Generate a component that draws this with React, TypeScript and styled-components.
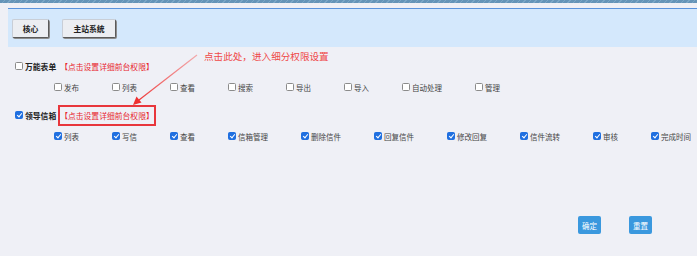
import React from "react";
import styled, { createGlobalStyle } from "styled-components";

interface Perm {
  label: string;
  checked: boolean;
}

interface Group {
  title: string;
  checked: boolean;
  highlighted: boolean;
  items: Perm[];
}

const groups: Group[] = [
  {
    title: "万能表单",
    checked: false,
    highlighted: false,
    items: ["发布", "列表", "查看", "搜索", "导出", "导入", "自动处理", "管理"].map((label) => ({
      label,
      checked: false,
    })),
  },
  {
    title: "领导信箱",
    checked: true,
    highlighted: true,
    items: ["列表", "写信", "查看", "信箱管理", "删除信件", "回复信件", "修改回复", "信件流转", "审核", "完成时间"].map(
      (label) => ({ label, checked: true })
    ),
  },
];

const GlobalStyle = createGlobalStyle`
  html, body {
    margin: 0;
    padding: 0;
    background: #eff0f6;
    overflow: hidden;
  }
  body {
    font-family: "Noto Sans CJK SC", "Noto Sans", sans-serif;
    color: #333;
  }
`;

const Page = styled.div`
  position: relative;
  width: 697px;
  height: 256px;
`;

const TopStripe = styled.div`
  height: 3px;
  background: repeating-linear-gradient(135deg, #6594b8 0 3px, #7ba6c6 3px 4px);
`;

const Toolbar = styled.div`
  display: flex;
  align-items: center;
  gap: 13px;
  height: 38px;
  margin: 5px 0 0 8px;
  padding: 0 0 0 4px;
  border-top: 1px solid #5b93dc;
  background: #d4e8fc;
`;

const TabButton = styled.button<{ width: number }>`
  width: ${({ width }) => width}px;
  height: 19px;
  margin-top: 1px;
  padding: 0;
  border: 1px solid #c9ced6;
  border-right-color: #5a5a5a;
  border-bottom-color: #5a5a5a;
  border-radius: 2px;
  box-shadow: 1px 1px 0 #8d8d8d;
  background: #eceef2;
  font-family: "Noto Sans CJK SC", sans-serif;
  font-size: 7.8px;
  font-weight: bold;
  color: #222;
`;

const Content = styled.div`
  display: flex;
  flex-direction: column;
  padding: 11px 0 0 15px;
`;

const GroupBlock = styled.div`
  display: flex;
  flex-direction: column;
  margin-bottom: 12px;
`;

const GroupHeader = styled.div`
  display: flex;
  align-items: center;
  height: 16px;
`;

const Box = styled.input.attrs({ type: "checkbox", readOnly: true })`
  appearance: none;
  position: relative;
  flex: none;
  width: 8px;
  height: 8px;
  margin: 0 2px 0 0;
  border: 1px solid #8b8b8b;
  border-radius: 1.5px;
  background: #fff;

  &:checked {
    border-color: #1f6fe0;
    background: #1f6fe0;
  }

  &:checked::after {
    content: "";
    position: absolute;
    left: 2px;
    top: 0px;
    width: 2px;
    height: 4px;
    border: solid #fff;
    border-width: 0 1.2px 1.2px 0;
    transform: rotate(40deg);
  }
`;

const GroupTitle = styled.span`
  font-size: 7.8px;
  font-weight: bold;
  color: #222;
`;

const PermLink = styled.a<{ highlighted: boolean }>`
  margin-left: ${({ highlighted }) => (highlighted ? 2 : 4)}px;
  padding: ${({ highlighted }) => (highlighted ? "3px 0" : "0")};
  border: ${({ highlighted }) => (highlighted ? "2px solid #e8363c" : "none")};
  font-size: 7.8px;
  line-height: 11px;
  color: #e8262e;
  cursor: pointer;
`;

const ItemsRow = styled.div`
  display: flex;
  align-items: center;
  height: 16px;
  margin-top: 5px;
  padding-left: 39px;
  white-space: nowrap;
`;

const Item = styled.label`
  display: inline-flex;
  align-items: center;
  margin-right: 33px;
  font-size: 7.5px;
  color: #444;
`;

const Footer = styled.div`
  display: flex;
  justify-content: flex-end;
  gap: 28px;
  margin-top: 60px;
  padding-right: 45px;
`;

const ActionButton = styled.button`
  height: 18px;
  padding: 0 4px;
  border: none;
  border-radius: 2px;
  background: #3a98de;
  font-family: "Noto Sans CJK SC", sans-serif;
  font-size: 7.5px;
  color: #fff;
`;

const Callout = styled.div`
  position: absolute;
  left: 204px;
  top: 49px;
  font-size: 9.6px;
  color: #f04848;
  white-space: nowrap;
`;

const ArrowLayer = styled.svg`
  position: absolute;
  left: 0;
  top: 0;
  pointer-events: none;
`;

export default function App() {
  return (
    <Page>
      <GlobalStyle />
      <TopStripe />
      <Toolbar>
        <TabButton width={37}>核心</TabButton>
        <TabButton width={54}>主站系统</TabButton>
      </Toolbar>
      <Content>
        {groups.map((g) => (
          <GroupBlock key={g.title}>
            <GroupHeader>
              <Box checked={g.checked} />
              <GroupTitle>{g.title}</GroupTitle>
              <PermLink highlighted={g.highlighted}>【点击设置详细前台权限】</PermLink>
            </GroupHeader>
            <ItemsRow>
              {g.items.map((it) => (
                <Item key={it.label}>
                  <Box checked={it.checked} />
                  {it.label}
                </Item>
              ))}
            </ItemsRow>
          </GroupBlock>
        ))}
      </Content>
      <Footer>
        <ActionButton>确定</ActionButton>
        <ActionButton>重置</ActionButton>
      </Footer>
      <Callout>点击此处，进入细分权限设置</Callout>
      <ArrowLayer width={697} height={256}>
        <defs>
          <linearGradient id="arrowFade" x1="197" y1="55" x2="136" y2="103" gradientUnits="userSpaceOnUse">
            <stop offset="0" stopColor="#f47a7a" stopOpacity="0.6" />
            <stop offset="1" stopColor="#ee3030" />
          </linearGradient>
        </defs>
        <line x1="197" y1="55" x2="139" y2="100" stroke="url(#arrowFade)" strokeWidth="1.2" />
        <polygon points="133,105 136.5,96.5 141.5,102.5" fill="#ee3030" />
      </ArrowLayer>
    </Page>
  );
}
